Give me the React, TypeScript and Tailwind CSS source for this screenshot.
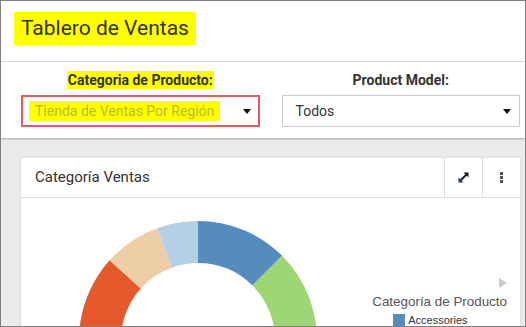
const segments = [
  { from: 0, to: 45, color: "#568bbe" },
  { from: 45, to: 140, color: "#9ed575" },
  { from: 140, to: 230, color: "#f4a957" },
  { from: 230, to: 312, color: "#e4582c" },
  { from: 312, to: 340, color: "#eecea6" },
  { from: 340, to: 360, color: "#b5cfe6" },
];

const ringPath = (a0: number, a1: number) => {
  const cx = 177;
  const cy = 142;
  const R = 119;
  const r = 77;
  const pt = (a: number, rad: number) => [
    cx + rad * Math.sin((a * Math.PI) / 180),
    cy - rad * Math.cos((a * Math.PI) / 180),
  ];
  const [x0, y0] = pt(a0, R);
  const [x1, y1] = pt(a1, R);
  const [x2, y2] = pt(a1, r);
  const [x3, y3] = pt(a0, r);
  const large = a1 - a0 > 180 ? 1 : 0;
  return `M${x0} ${y0} A${R} ${R} 0 ${large} 1 ${x1} ${y1} L${x2} ${y2} A${r} ${r} 0 ${large} 0 ${x3} ${y3} Z`;
};

const Caret = () => (
  <span className="h-0 w-0 border-x-[4px] border-t-[5px] border-x-transparent border-t-[#111]" />
);

const ExpandIcon = () => (
  <svg width="13" height="13" viewBox="0 0 13 13">
    <path d="M3 10 L10 3" stroke="#1a1a1a" strokeWidth="2" />
    <path d="M6.5 1.5 H11.5 V6.5 Z" fill="#1a1a1a" />
    <path d="M1.5 6.5 V11.5 H6.5 Z" fill="#1a3a6a" />
  </svg>
);

const App = () => {
  return (
    <div className="flex h-[327px] w-[526px] flex-col overflow-hidden border border-[#808080] bg-[#ebebeb] font-['Roboto',sans-serif]">
      {/* Title */}
      <header className="h-[61px] shrink-0 border-b border-[#dddddd] bg-white pl-[13px] pt-[11px]">
        <h1 className="inline-block bg-[#ffff00] px-[7px] text-[21px] leading-[33px] text-[#333333]">
          Tablero de Ventas
        </h1>
      </header>

      {/* Filters */}
      <section className="relative z-10 grid h-[76px] shrink-0 grid-cols-2 gap-[22px] bg-white pl-[20px] pr-[5px] pt-[9px] shadow-[0_1px_2px_rgba(0,0,0,0.3)]">
        <div className="flex flex-col items-center">
          <span className="bg-[#ffff00] px-[1px] text-[14px] font-bold leading-[18px] text-[#333333]">
            Categoria de Producto:
          </span>
          <div className="mt-[6px] flex h-[32px] w-full items-center justify-between border-2 border-[#e35a64] pl-[6px] pr-[7px]">
            <span className="bg-[#ffff00] px-[6px] text-[14px] leading-[20px] text-[#b9b93c]">
              Tienda de Ventas Por Región
            </span>
            <Caret />
          </div>
        </div>
        <div className="flex flex-col items-center">
          <span className="text-[14px] font-bold leading-[18px] text-[#333333]">Product Model:</span>
          <div className="mt-[6px] flex h-[32px] w-full items-center justify-between border border-[#cccccc] pl-[13px] pr-[8px]">
            <span className="text-[14px] text-[#333333]">Todos</span>
            <Caret />
          </div>
        </div>
      </section>

      {/* Card */}
      <main className="pl-[19px] pr-[4px] pt-[19px]">
        <div className="border border-[#e2e2e2] bg-white shadow-[0_1px_2px_rgba(0,0,0,0.08)]">
          <div className="flex h-[40px] items-stretch border-b border-[#dddddd]">
            <h2 className="flex flex-1 items-center pl-[14px] text-[15px] text-[#333333]">Categoría Ventas</h2>
            <button className="flex w-[38px] items-center justify-center border-l border-[#dddddd]">
              <ExpandIcon />
            </button>
            <button className="flex w-[38px] flex-col items-center justify-center gap-[1px] border-l border-[#dddddd]">
              <span className="h-[3px] w-[3px] bg-[#555555]" />
              <span className="h-[3px] w-[3px] bg-[#555555]" />
              <span className="h-[3px] w-[3px] bg-[#555555]" />
            </button>
          </div>

          <div className="relative h-[300px]">
            <svg width="500" height="300" className="block">
              {segments.map((s) => (
                <path key={s.from} d={ringPath(s.from, s.to)} fill={s.color} />
              ))}
            </svg>

            {/* Legend */}
            <div className="absolute right-[13px] top-[80px] flex flex-col items-start font-['Liberation_Sans',Arial,sans-serif]">
              <span className="h-0 w-0 self-end border-y-[5px] border-l-[8px] border-y-transparent border-l-[#cccccc]" />
              <span className="mt-[5px] text-[13.4px] leading-[17px] text-[#555555]">Categoría de Producto</span>
              <div className="ml-[21px] mt-[2px] flex items-center gap-[3px]">
                <span className="h-[12px] w-[12px] bg-[#568bbe]" />
                <span className="text-[11px] text-[#333333]">Accessories</span>
              </div>
            </div>
          </div>
        </div>
      </main>
    </div>
  );
};

export default App;
